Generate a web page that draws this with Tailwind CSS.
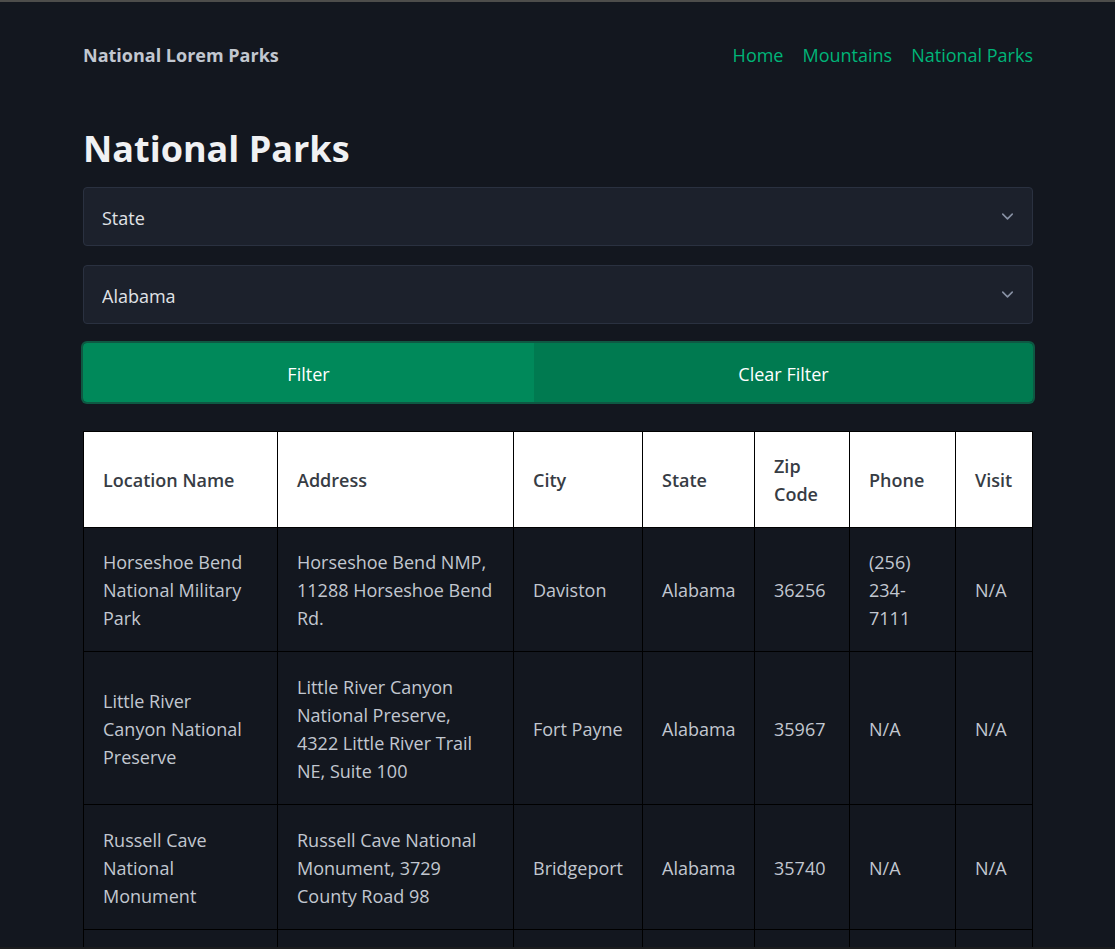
<!DOCTYPE html>
<html lang="en">
<head>
<meta charset="utf-8">
<meta name="viewport" content="width=device-width, initial-scale=1">
<title>National Lorem Parks</title>
<script src="https://cdn.jsdelivr.net/npm/@tailwindcss/browser@4"></script>
</head>
<body class="flex h-screen flex-col overflow-hidden border-t-2 border-b-2 border-t-[#4d4d4b] border-b-[#1b1c1e] bg-[#13171f] font-['Open_Sans','Noto_Sans',sans-serif] text-[18px] leading-[28px] text-[#c2c7d0]">
  <div class="min-h-0 flex-1 overflow-hidden pl-[83px] pr-[82px]">
    <header class="flex items-center justify-between pt-[39px]">
      <strong class="font-bold">National Lorem Parks</strong>
      <nav class="flex gap-[19px] text-[#00b478]">
        <a href="#">Home</a>
        <a href="#">Mountains</a>
        <a href="#">National Parks</a>
      </nav>
    </header>
    <main>
      <h1 class="pt-14 text-[36px] leading-[48px] font-bold text-[#f0f1f3]">National Parks</h1>
      <form class="pt-[14px]">
        <div class="relative">
          <select aria-label="Search type" class="h-[59px] w-full appearance-none rounded-sm border border-[#2a3140] bg-[#1c212c] px-[18px] pt-0.5 text-[#e0e3e7]">
            <option>State</option>
          </select>
          <svg class="pointer-events-none absolute top-[20px] right-[16px] size-[19px]" viewBox="0 0 24 24" fill="none" stroke="#8891a4" stroke-width="2" stroke-linecap="round" stroke-linejoin="round"><path d="M6 9l6 6 6-6"/></svg>
        </div>
        <div class="relative mt-[19px]">
          <select aria-label="State" class="h-[59px] w-full appearance-none rounded-sm border border-[#2a3140] bg-[#1c212c] px-[18px] pt-0.5 text-[#e0e3e7]">
            <option>Alabama</option>
          </select>
          <svg class="pointer-events-none absolute top-[20px] right-[16px] size-[19px]" viewBox="0 0 24 24" fill="none" stroke="#8891a4" stroke-width="2" stroke-linecap="round" stroke-linejoin="round"><path d="M6 9l6 6 6-6"/></svg>
        </div>
        <div class="mt-[19px] flex rounded-sm text-white ring-2 ring-[#0e5943]">
          <button type="button" class="h-[59px] w-[451px] rounded-l-sm bg-[#00895a] pt-0.5">Filter</button>
          <button type="button" class="h-[59px] flex-1 rounded-r-sm bg-[#007a50] pt-0.5">Clear Filter</button>
        </div>
      </form>
      <table class="mt-[29px] w-full table-fixed border-collapse text-left [&_td]:border [&_td]:border-black [&_td]:px-[19px] [&_td]:pt-5 [&_td]:pb-[19px] [&_th]:border [&_th]:border-black [&_th]:px-[19px] [&_th]:py-[19px]">
        <colgroup>
          <col class="w-[194px]"><col class="w-[236px]"><col class="w-[129px]"><col class="w-[112px]"><col class="w-[95px]"><col class="w-[106px]"><col>
        </colgroup>
        <thead class="bg-white text-[#373c44]">
          <tr class="h-[96px] [&>th]:font-semibold"><th>Location Name</th><th>Address</th><th>City</th><th>State</th><th>Zip Code</th><th>Phone</th><th>Visit</th></tr>
        </thead>
        <tbody>
          <tr class="h-[124px]"><td>Horseshoe Bend National Military Park</td><td>Horseshoe Bend NMP, 11288 Horseshoe Bend Rd.</td><td>Daviston</td><td>Alabama</td><td>36256</td><td>(256) 234-7111</td><td>N/A</td></tr>
          <tr class="h-[153px]"><td>Little River Canyon National Preserve</td><td>Little River Canyon National Preserve, 4322 Little River Trail NE, Suite 100</td><td>Fort Payne</td><td>Alabama</td><td>35967</td><td>N/A</td><td>N/A</td></tr>
          <tr class="h-[125px]"><td>Russell Cave National Monument</td><td>Russell Cave National Monument, 3729 County Road 98</td><td>Bridgeport</td><td>Alabama</td><td>35740</td><td>N/A</td><td>N/A</td></tr>
          <tr><td></td><td></td><td></td><td></td><td></td><td></td><td></td></tr>
        </tbody>
      </table>
    </main>
  </div>
</body>
</html>
